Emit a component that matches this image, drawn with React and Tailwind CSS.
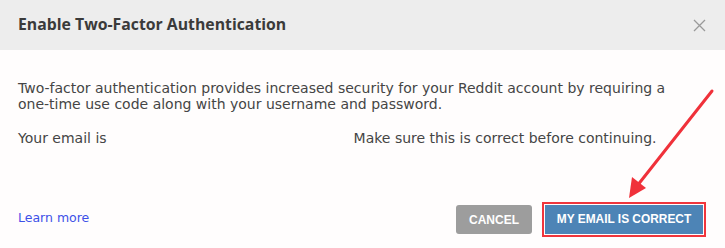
export default function App() {
  return (
    <div className="relative w-[725px] h-[248px] bg-[#fffdfd] overflow-hidden" style={{ fontFamily: '"DejaVu Sans", Verdana, sans-serif' }}>
      <div className="h-[50px] bg-[#ededed] flex items-center justify-between pl-[18px] pr-[19px]">
        <h1 className="text-[15.8px] font-bold text-[#3a3a3a]" style={{ fontFamily: '"Open Sans", sans-serif' }}>Enable Two-Factor Authentication</h1>
        <svg width="13" height="13" viewBox="0 0 13 13" className="text-[#9a9a9a]">
          <path d="M1 1L12 12M12 1L1 12" stroke="currentColor" strokeWidth="1.3" />
        </svg>
      </div>
      <div className="px-[18px] pt-[30px] text-[14px] leading-[16px] text-[#454545]">
        <p className="w-[670px]">Two-factor authentication provides increased security for your Reddit account by requiring a one-time use code along with your username and password.</p>
        <p className="mt-[18px] flex">
          <span>Your email is</span>
          <span className="inline-block w-[247px]"></span>
          <span>Make sure this is correct before continuing.</span>
        </p>
      </div>
      <div className="absolute left-0 right-0 top-[202px] flex items-center justify-between pl-[18px] pr-[19px]">
        <a className="text-[12.5px] text-[#3d50e8] -mt-[2px]">Learn more</a>
        <div className="flex items-center gap-[10px]" style={{ fontFamily: '"Liberation Sans", Arial, sans-serif' }}>
          <button className="w-[76px] h-[29px] rounded-[3px] bg-[#9d9d9d] text-white font-bold text-[12px]">CANCEL</button>
          <div className="border-2 border-[#f0353c] p-[1px]">
            <button className="w-[158px] h-[29px] bg-[#4d84b6] text-white font-bold text-[11.9px] block">MY EMAIL IS CORRECT</button>
          </div>
        </div>
      </div>
      <svg className="absolute left-0 top-0 pointer-events-none" width="725" height="248">
        <line x1="712" y1="91" x2="637" y2="186" stroke="#f0313a" strokeWidth="3" strokeLinecap="round" />
        <polygon points="629,198 632,177 646,188" fill="#f0313a" />
      </svg>
    </div>
  );
}
